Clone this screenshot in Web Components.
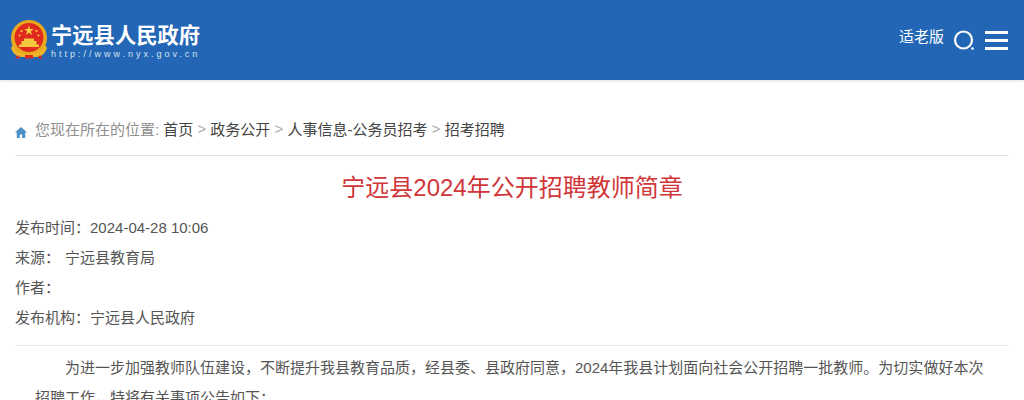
<!DOCTYPE html>
<html lang="zh">
<head>
<meta charset="utf-8">
<title>宁远县2024年公开招聘教师简章</title>
<style>
html, body { margin: 0; height: 400px; overflow: hidden; background: #fff; }
body { font-family: "Liberation Sans", "Noto Sans CJK SC", sans-serif; color: #333; }
</style>
</head>
<body>
<site-header></site-header>
<article-page>
  <bread-crumb slot="crumb"></bread-crumb>
  <span slot="title">宁远县2024年公开招聘教师简章</span>
  <meta-row slot="meta" label="发布时间：" value="2024-04-28 10:06"></meta-row>
  <meta-row slot="meta" label="来源：" value="宁远县教育局" gap="5"></meta-row>
  <meta-row slot="meta" label="作者：" value=""></meta-row>
  <meta-row slot="meta" label="发布机构：" value="宁远县人民政府"></meta-row>
  <p>为进一步加强教师队伍建设，不断提升我县教育品质，经县委、县政府同意，2024年我县计划面向社会公开招聘一批教师。为切实做好本次招聘工作，特将有关事项公告如下：</p>
</article-page>

<template id="tpl-header">
  <style>
    :host { display: flex; box-sizing: border-box; height: 80px; background: #2266b5; color: #fff; align-items: flex-start; justify-content: space-between; box-shadow: 0 1px 3px rgba(0,0,0,.12); position: relative; }
    .logo { display: flex; align-items: flex-start; gap: 3px; padding: 20px 0 0 10px; }
    .words { display: flex; flex-direction: column; padding-top: 4px; }
    .name { font-size: 21.3px; font-weight: bold; line-height: 25px; white-space: nowrap; }
    .url { font-size: 9px; line-height: 10px; letter-spacing: 3px; color: #d5e2f2; white-space: nowrap; }
    .tools { display: flex; align-items: flex-start; padding: 26px 15px 0 0; }
    .old { font-size: 15px; line-height: 21px; }
    .search { display: block; margin: 3px 0 0 9px; }
    .menu { display: block; margin: 4px 0 0 10px; }
  </style>
  <div class="logo">
    <svg width="38" height="40" viewBox="0 0 38 40">
      <circle cx="19" cy="18" r="18" fill="#e9a91f"/>
      <circle cx="19" cy="17.500" r="14.500" fill="#e02a20"/>
      <path d="M19 5.500l1.200 3.600h3.700l-3 2.200 1.100 3.600-3-2.200-3 2.200 1.100-3.600-3-2.200h3.700z" fill="#f6cf3e"/>
      <circle cx="11.500" cy="11" r="1.100" fill="#f6cf3e"/><circle cx="26.500" cy="11" r="1.100" fill="#f6cf3e"/>
      <circle cx="9.500" cy="15.500" r="1" fill="#f6cf3e"/><circle cx="28.500" cy="15.500" r="1" fill="#f6cf3e"/>
      <path d="M9 27h20v-2.500h-2.500v-3.500h-2.500v-2.500h-10v2.500h-2.500v3.500h-2.500z" fill="#f3c83c"/>
      <path d="M3 25c3 7 8 9 16 9s13-2 16-9l2 3c-2 6-6 9-11 9h-14c-5 0-9-3-11-9z" fill="#f0b429"/>
      <path d="M8 35l-3 4 5-1zM30 35l3 4-5-1zM15 35h8v3.500h-8z" fill="#e02a20"/>
    </svg>
    <div class="words">
      <span class="name">宁远县人民政府</span>
      <span class="url">http://www.nyx.gov.cn</span>
    </div>
  </div>
  <div class="tools">
    <span class="old">适老版</span>
    <svg class="search" width="22" height="22" viewBox="0 0 22 22" fill="none">
      <circle cx="10.500" cy="11" r="8.500" stroke="#fff" stroke-width="2.200"/>
      <circle cx="19.500" cy="19.500" r="1.300" fill="#fff"/>
    </svg>
    <svg class="menu" width="24" height="20" viewBox="0 0 24 20" fill="#fff">
      <rect y="1" width="23" height="3"/><rect y="9" width="23" height="3"/><rect y="17" width="23" height="3"/>
    </svg>
  </div>
</template>

<template id="tpl-crumb">
  <style>
    :host { display: flex; align-items: center; height: 28px; font-size: 15px; color: #444; white-space: nowrap; }
    svg { display: block; margin: 8px 8px 0 0; }
    .you { color: #8f8f8f; margin-right: 4px; }
    .sep { color: #aaa; margin: 1px 4.200px 0; }
  </style>
  <svg width="12" height="11" viewBox="0 0 12 11" fill="#4a90c4"><path d="M6 0L0 5.500h1.800V11h3V7.500h2.400V11h3V5.500H12z"/></svg>
  <span class="you">您现在所在的位置:</span>
  <span>首页</span><span class="sep">&gt;</span>
  <span>政务公开</span><span class="sep">&gt;</span>
  <span>人事信息-公务员招考</span><span class="sep">&gt;</span>
  <span>招考招聘</span>
</template>

<template id="tpl-meta">
  <style>
    :host { display: block; height: 30px; line-height: 30px; font-size: 15px; color: #555; white-space: nowrap; }
    .v { display: inline-block; }
  </style>
  <span class="l"></span><span class="v"></span>
</template>

<template id="tpl-page">
  <style>
    :host { display: block; padding: 34px 15px 0; }
    .crumb { padding-bottom: 13px; border-bottom: 1px solid #e3e3e3; }
    h1 { margin: 0; padding: 17px 0 0; height: 40px; box-sizing: content-box; font-size: 24px; line-height: 30px; font-weight: normal; color: #d0363a; text-align: center; }
    .meta { padding-bottom: 12px; border-bottom: 1px solid #ececec; }
    .body { padding: 7px 20px 0; font-size: 15px; line-height: 30px; color: #555; }
    ::slotted(p) { margin: 0; text-indent: 2em; }
  </style>
  <div class="crumb"><slot name="crumb"></slot></div>
  <h1><slot name="title"></slot></h1>
  <div class="meta"><slot name="meta"></slot></div>
  <div class="body"><slot></slot></div>
</template>

<script>
function stamp(el, id) {
  const shadow = el.attachShadow({ mode: "open" });
  shadow.appendChild(document.getElementById(id).content.cloneNode(true));
  return shadow;
}

class SiteHeader extends HTMLElement {
  constructor() { super(); stamp(this, "tpl-header"); }
}
class BreadCrumb extends HTMLElement {
  constructor() { super(); stamp(this, "tpl-crumb"); }
}
class MetaRow extends HTMLElement {
  connectedCallback() {
    const shadow = this.shadowRoot || stamp(this, "tpl-meta");
    shadow.querySelector(".l").textContent = this.getAttribute("label");
    const v = shadow.querySelector(".v");
    v.textContent = this.getAttribute("value");
    v.style.marginLeft = (this.getAttribute("gap") || 0) + "px";
  }
}
class ArticlePage extends HTMLElement {
  constructor() { super(); stamp(this, "tpl-page"); }
}

customElements.define("site-header", SiteHeader);
customElements.define("bread-crumb", BreadCrumb);
customElements.define("meta-row", MetaRow);
customElements.define("article-page", ArticlePage);
</script>
</body>
</html>
